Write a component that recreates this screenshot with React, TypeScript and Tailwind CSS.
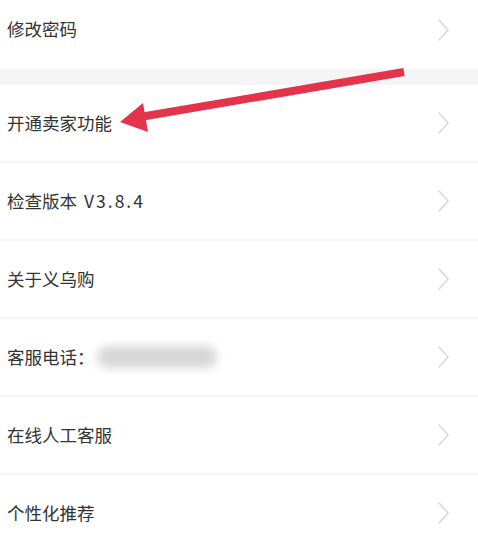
const font = { fontFamily: '"Noto Sans CJK SC", "Noto Sans", sans-serif' };

function Chevron() {
  return (
    <svg width="14" height="24" viewBox="0 0 14 24" fill="none" className="shrink-0">
      <path d="M2 2 L11 12 L2 22" stroke="#d9d9d9" strokeWidth="1.6" strokeLinecap="round" strokeLinejoin="round" />
    </svg>
  );
}

function Row({ children, first = false }: { children: React.ReactNode; first?: boolean }) {
  return (
    <div className={`flex items-center justify-between bg-white pl-[7px] pr-[27px] ${first ? "h-[79px] -mt-[10px]" : "h-[76px]"}`}>
      <div className="flex items-center text-[17.5px] text-[#333333]">{children}</div>
      <Chevron />
    </div>
  );
}

function Sep() {
  return <div className="h-[2px] bg-[#f6f6f6]" />;
}

export default function App() {
  return (
    <div className="relative w-[478px] h-[538px] overflow-hidden bg-white" style={font}>
      <Row first>修改密码</Row>
      <div className="h-[16px] bg-[#f5f5f5]" />
      <Row>开通卖家功能</Row>
      <Sep />
      <Row>
        检查版本 <span className="ml-[7px] tracking-[2px]">V3.8.4</span>
      </Row>
      <Sep />
      <Row>关于义乌购</Row>
      <Sep />
      <Row>
        客服电话：
        <span className="ml-[2px] h-[22px] w-[120px] rounded-full bg-[#d6d6d6] blur-[5px]" />
      </Row>
      <Sep />
      <Row>在线人工客服</Row>
      <Sep />
      <Row>个性化推荐</Row>

      <svg className="absolute left-0 top-0 pointer-events-none" width="478" height="538" viewBox="0 0 478 538">
        <line x1="404" y1="72" x2="140" y2="117" stroke="#e3344b" strokeWidth="8" strokeLinecap="butt" />
        <polygon points="120,122 143,103 148,132" fill="#e3344b" />
      </svg>
    </div>
  );
}
